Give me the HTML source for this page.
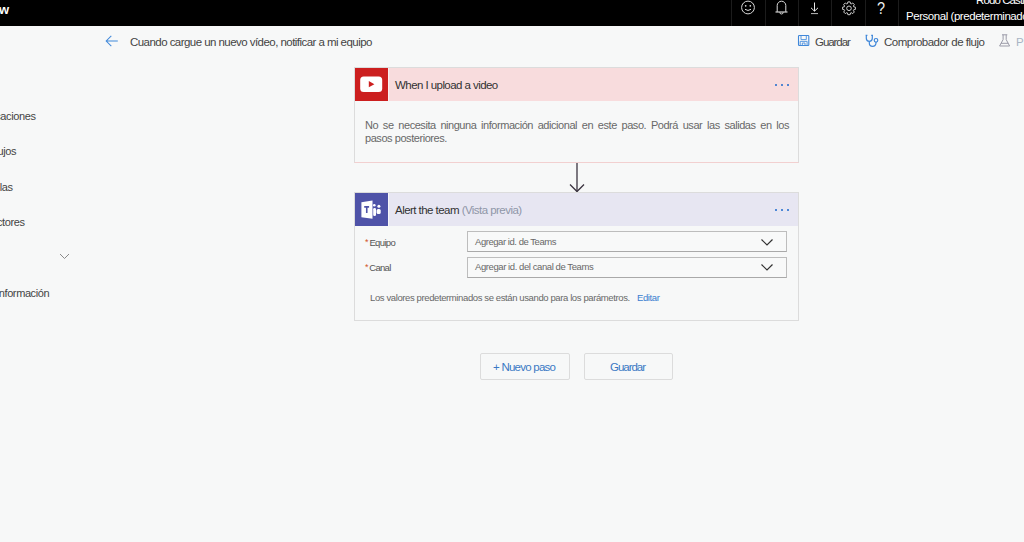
<!DOCTYPE html>
<html><head><meta charset="utf-8">
<style>
*{margin:0;padding:0;box-sizing:border-box}
html,body{width:1024px;height:542px;overflow:hidden;background:#f7f8f8;font-family:"Liberation Sans",sans-serif;color:#333}
.abs{position:absolute}
.t{position:absolute;white-space:nowrap;line-height:1}
.dv{position:absolute;top:0;width:1px;height:26px;background:#1c1c1c}
.dots{position:absolute;top:84px}
.dots i{position:absolute;top:0;width:2.4px;height:2.4px;border-radius:50%;background:#1a68cc}
.inp{position:absolute;left:467px;width:320px;border:1px solid #bdbdbd;border-bottom-color:#a9a9a9;background:#f8f9f9}
.btn{position:absolute;top:353px;height:27px;border:1px solid #dcdcdc;border-radius:2px;background:#f7f8f8}
</style></head><body>
<div class="abs" style="left:0;top:0;width:1024px;height:26px;background:#000"></div>
<div class="dv" style="left:731px"></div>
<div class="dv" style="left:765px"></div>
<div class="dv" style="left:798px"></div>
<div class="dv" style="left:831px"></div>
<div class="dv" style="left:865px"></div>
<div class="dv" style="left:898px"></div>
<!-- smiley -->
<svg class="abs" style="left:740px;top:0" width="16" height="16" viewBox="0 0 16 16"><circle cx="8" cy="7.5" r="6.4" fill="none" stroke="#d8d8d8" stroke-width="1"/><circle cx="5.7" cy="5.8" r="0.85" fill="#ddd"/><circle cx="10.3" cy="5.8" r="0.85" fill="#ddd"/><path d="M5 9.3 Q8 11.6 11 9.3" fill="none" stroke="#ddd" stroke-width="1"/></svg>
<!-- bell -->
<svg class="abs" style="left:774px;top:0" width="16" height="16" viewBox="0 0 16 16"><path d="M3.2 11.8 V5.5 A4.3 4.3 0 0 1 11.8 5.5 V11.8" fill="none" stroke="#dcdcdc" stroke-width="1"/><path d="M1.5 12 H13.5" stroke="#e6e6e6" stroke-width="1.1"/><path d="M5.8 12.3 A1.7 1.7 0 0 0 9.2 12.3" fill="none" stroke="#ddd" stroke-width="1"/></svg>
<!-- download -->
<svg class="abs" style="left:808px;top:0" width="14" height="16" viewBox="0 0 14 16"><path d="M6.5 2.5 V11" stroke="#e8e8e8" stroke-width="1"/><path d="M3 7.8 L6.5 11.2 L10 7.8" fill="none" stroke="#e8e8e8" stroke-width="1"/><path d="M3 13.6 H10" stroke="#bbb" stroke-width="1"/></svg>
<!-- gear -->
<svg class="abs" style="left:841px;top:0" width="16" height="17" viewBox="0 0 16 17"><path d="M6.87 1.90 L9.13 1.90 L9.51 3.64 L10.22 3.93 L11.73 2.98 L13.32 4.57 L12.37 6.08 L12.66 6.79 L14.40 7.17 L14.40 9.43 L12.66 9.81 L12.37 10.52 L13.32 12.03 L11.73 13.62 L10.22 12.67 L9.51 12.96 L9.13 14.70 L6.87 14.70 L6.49 12.96 L5.78 12.67 L4.27 13.62 L2.68 12.03 L3.63 10.52 L3.34 9.81 L1.60 9.43 L1.60 7.17 L3.34 6.79 L3.63 6.08 L2.68 4.57 L4.27 2.98 L5.78 3.93 L6.49 3.64 Z" fill="none" stroke="#d0d0d0" stroke-width="1" stroke-linejoin="round"/><circle cx="8" cy="8.3" r="2.3" fill="none" stroke="#d0d0d0" stroke-width="1"/></svg>
<!-- help -->
<div class="t" style="left:877px;top:-0.5px;font-size:17px;color:#eee;transform:scaleX(0.85);transform-origin:0 0">?</div>

<!-- title row icons -->
<svg class="abs" style="left:104px;top:34px" width="16" height="14" viewBox="0 0 16 14"><path d="M2.2 7 H13.8 M7.3 1.9 L2.2 7 L7.3 12.1" fill="none" stroke="#4189da" stroke-width="1.05"/></svg>
<svg class="abs" style="left:795px;top:32px" width="18" height="18" viewBox="0 0 18 18"><rect x="3.5" y="3.5" width="10.3" height="10" rx="0.8" fill="none" stroke="#3f87d9" stroke-width="1.1"/><path d="M6 3.5 V7.6 H11.3 V3.5 M5.2 13.5 V9.4 H12.1 V13.5 M7.3 13.5 V11 H10 V13.5" fill="none" stroke="#4a8fdc" stroke-width="0.9"/></svg>
<svg class="abs" style="left:862px;top:32px" width="20" height="18" viewBox="0 0 20 18"><path d="M4.3 3.3 V6.3 A3 3 0 0 0 10.3 6.3 V3.3 M3.6 3.3 H5.4 M9.2 3.3 H11 M7.3 9.3 V11.1 A3.3 3.3 0 0 0 14 11.1 V10.1" fill="none" stroke="#3f87d9" stroke-width="1.2"/><circle cx="14" cy="8.3" r="1.8" fill="none" stroke="#3f87d9" stroke-width="1.2"/></svg>
<svg class="abs" style="left:994px;top:32px" width="18" height="16" viewBox="0 0 18 16"><path d="M8 2.8 H13.3 M9.1 2.8 V7.6 L5.6 14 H15.6 L12.2 7.6 V2.8 M6.9 11.3 H14.3" fill="none" stroke="#9b9ba8" stroke-width="1"/></svg>

<!-- nav chevron -->
<svg class="abs" style="left:59px;top:252px" width="11" height="9" viewBox="0 0 11 9"><path d="M1 2 L5.5 6.5 L10 2" fill="none" stroke="#8a8a8a" stroke-width="1"/></svg>

<!-- card 1 -->
<div class="abs" style="left:354px;top:67px;width:445px;height:96px;border:1px solid #dcdcdc;border-bottom-color:#f2d0d0;background:#f7f8f8"></div>
<div class="abs" style="left:355px;top:68px;width:443px;height:33px;background:#f8dcdd"></div><div class="abs" style="left:388px;top:68px;width:1px;height:33px;background:#fbeeee"></div>
<div class="abs" style="left:355px;top:68px;width:33px;height:33px;background:#cc1f1f"></div>
<svg class="abs" style="left:360px;top:76px" width="23" height="17" viewBox="0 0 23 17"><rect x="0.2" y="0.6" width="22" height="15.5" rx="3.5" fill="#fff"/><path d="M8.8 5 L14.4 8.2 L8.8 11.3 Z" fill="#cc1f1f"/></svg>
<div class="dots" style="left:775px"><i style="left:0"></i><i style="left:6px"></i><i style="left:12px"></i></div>

<!-- arrow -->
<svg class="abs" style="left:566px;top:162px" width="22" height="31" viewBox="0 0 22 31"><path d="M11 1 V29.5" stroke="#3b3440" stroke-width="1.3"/><path d="M4 22.5 L11 29.5 L18 22.5" fill="none" stroke="#3b3440" stroke-width="1.3"/></svg>

<!-- card 2 -->
<div class="abs" style="left:354px;top:192px;width:445px;height:129px;border:1px solid #dcdcdc;background:#f7f8f8"></div>
<div class="abs" style="left:355px;top:193px;width:443px;height:33px;background:#e7e6f2"></div><div class="abs" style="left:388px;top:193px;width:1px;height:33px;background:#f6f6fa"></div>
<div class="abs" style="left:355px;top:193px;width:33px;height:33px;background:#4f53a8"></div>
<svg class="abs" style="left:358px;top:196px" width="26" height="26" viewBox="0 0 26 26"><path d="M3.4 6.2 L14.5 4.6 V22.7 L3.4 21.2 Z" fill="#fff"/><path d="M6.2 10.85 H11.1 M8.75 10.2 V17" stroke="#4f53a8" stroke-width="1.6"/><circle cx="16.3" cy="9.3" r="1.3" fill="#fff"/><circle cx="20.9" cy="10.3" r="1.5" fill="#fff"/><rect x="15.2" y="12.1" width="2.8" height="7.8" rx="1.2" fill="#fff"/><rect x="18.6" y="12.9" width="4.1" height="5.2" rx="1.5" fill="#fff"/></svg>
<div class="dots" style="left:775px;top:209px"><i style="left:0"></i><i style="left:6px"></i><i style="left:12px"></i></div>
<div class="inp" style="top:231px;height:21px"></div>
<div class="inp" style="top:257px;height:21px"></div>
<svg class="abs" style="left:760px;top:237px" width="14" height="10" viewBox="0 0 14 10"><path d="M1.5 2.5 L7 8 L12.5 2.5" fill="none" stroke="#333" stroke-width="1.2"/></svg>
<svg class="abs" style="left:760px;top:262px" width="14" height="10" viewBox="0 0 14 10"><path d="M1.5 2.5 L7 8 L12.5 2.5" fill="none" stroke="#333" stroke-width="1.2"/></svg>

<div class="btn" style="left:480px;width:90px"></div>
<div class="btn" style="left:584px;width:89px"></div>
<div id="title" class="t" style="left:130px;top:37px;font-size:11.5px;letter-spacing:-0.548px;color:#444;font-weight:normal;">Cuando cargue un nuevo vídeo, notificar a mi equipo</div>
<div id="tb_save" class="t" style="left:815px;top:37px;font-size:11.5px;letter-spacing:-1.067px;color:#444;font-weight:normal;">Guardar</div>
<div id="tb_check" class="t" style="left:884px;top:37px;font-size:11.5px;letter-spacing:-0.512px;color:#444;font-weight:normal;">Comprobador de flujo</div>
<div id="tb_pr" class="t" style="left:1016px;top:37px;font-size:11.5px;letter-spacing:0px;color:#a8b4c4;font-weight:normal;">Pr</div>
<div id="hd_personal" class="t" style="left:906px;top:11px;font-size:11.5px;letter-spacing:-0.45px;color:#fff;font-weight:normal;">Personal (predeterminado)</div>
<div id="hd_rodo" class="t" style="left:976px;top:-5px;font-size:11.5px;letter-spacing:-0.9px;color:#fff;font-weight:normal;">Rodo Castillo</div>
<div id="hd_w" class="t" style="left:-1px;top:2.5px;font-size:13px;letter-spacing:0px;color:#fff;font-weight:bold;">w</div>
<div id="nav1" class="t" style="right:988.5px;top:110.8px;font-size:11px;letter-spacing:-0.4px;color:#444">Aplicaciones</div>
<div id="nav2" class="t" style="right:1007.8px;top:146.10000000000002px;font-size:11px;letter-spacing:-0.4px;color:#444">Flujos</div>
<div id="nav3" class="t" style="right:1011.5px;top:181.5px;font-size:11px;letter-spacing:-0.4px;color:#444">Plantillas</div>
<div id="nav4" class="t" style="right:999.5px;top:217.20000000000002px;font-size:11px;letter-spacing:-0.4px;color:#444">Conectores</div>
<div id="nav5" class="t" style="right:974.8px;top:288.3px;font-size:11px;letter-spacing:-0.4px;color:#444">Más información</div>
<div id="c1_title" class="t" style="left:395px;top:80px;font-size:11.5px;letter-spacing:-0.56px;color:#323232;font-weight:normal;">When I upload a video</div>
<div id="c1_l1" class="t" style="left:365px;top:120px;font-size:11px;letter-spacing:-0.45px;color:#686868;font-weight:normal;width:424px;text-align:justify;text-align-last:justify;">No se necesita ninguna información adicional en este paso. Podrá usar las salidas en los</div>
<div id="c1_l2" class="t" style="left:365px;top:133px;font-size:11px;letter-spacing:-0.443px;color:#686868;font-weight:normal;">pasos posteriores.</div>
<div id="c2_title" class="t" style="left:395px;top:205px;font-size:11.5px;letter-spacing:-0.543px;color:#323232;font-weight:normal;">Alert the team <span style="color:#8f96a8">(Vista previa)</span></div>
<div id="lb_eq" class="t" style="left:365px;top:238px;font-size:9.5px;letter-spacing:-0.634px;color:#555;font-weight:normal;"><span style="color:#d2532b;font-size:9px;position:relative;top:-1px">*</span><span style="margin-left:1.5px">Equipo</span></div>
<div id="lb_ca" class="t" style="left:365px;top:263px;font-size:9.5px;letter-spacing:-0.72px;color:#555;font-weight:normal;"><span style="color:#d2532b;font-size:9px;position:relative;top:-1px">*</span><span style="margin-left:1.5px">Canal</span></div>
<div id="ph1" class="t" style="left:475px;top:237px;font-size:9.5px;letter-spacing:-0.457px;color:#686868;font-weight:normal;">Agregar id. de Teams</div>
<div id="ph2" class="t" style="left:475px;top:262px;font-size:9.5px;letter-spacing:-0.418px;color:#686868;font-weight:normal;">Agregar id. del canal de Teams</div>
<div id="note" class="t" style="left:370px;top:293px;font-size:9.5px;letter-spacing:-0.388px;color:#686868;font-weight:normal;">Los valores predeterminados se están usando para los parámetros.</div>
<div id="edit" class="t" style="left:637px;top:293px;font-size:9.5px;letter-spacing:-0.4px;color:#3a7fd0;font-weight:normal;">Editar</div>
<div id="btn1" class="t" style="left:493px;top:362px;font-size:11.5px;letter-spacing:-0.753px;color:#3a78c4;font-weight:normal;">+ Nuevo paso</div>
<div id="btn2" class="t" style="left:610px;top:362px;font-size:11.5px;letter-spacing:-1.035px;color:#3a78c4;font-weight:normal;">Guardar</div>
</body></html>
